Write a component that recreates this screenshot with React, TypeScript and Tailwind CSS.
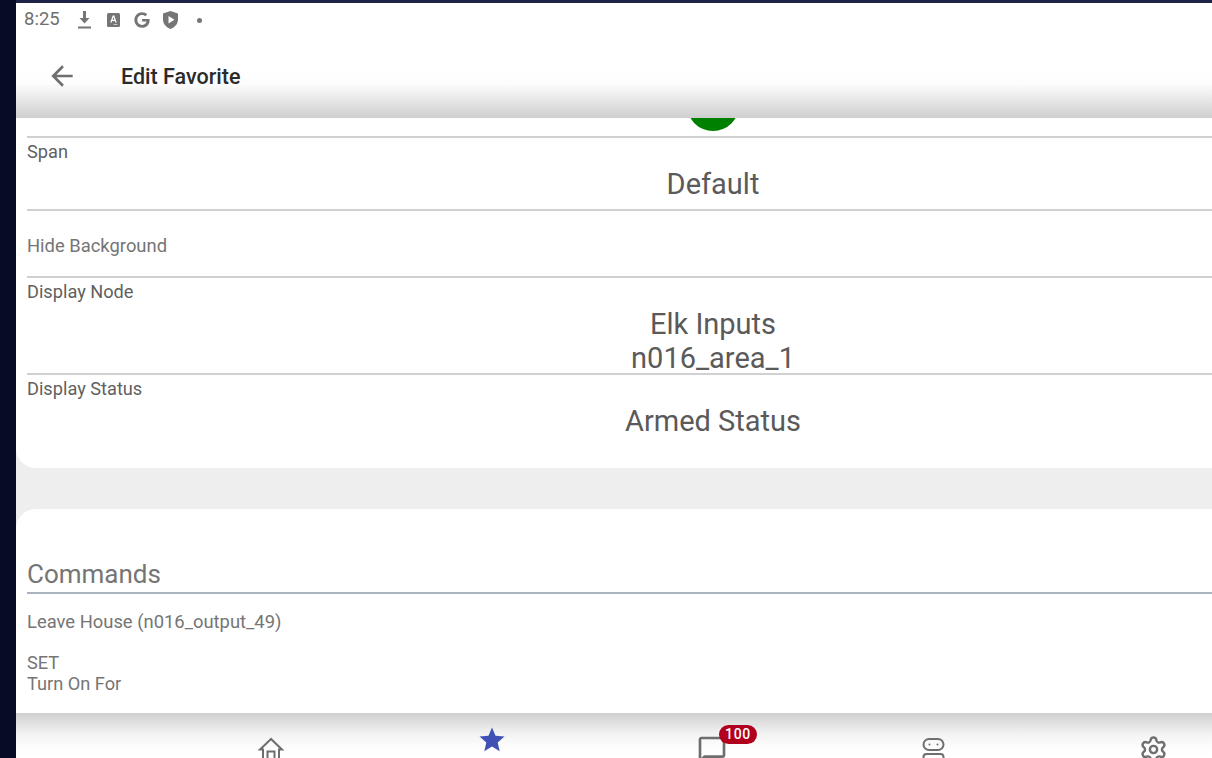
import { FaGoogle } from 'react-icons/fa'
import { Settings as SettingsIcon } from 'lucide-react'

function StatusBar() {
  return (
    <div className="flex h-[34px] items-center pl-2 text-[18.5px] text-[#6f6f6f]">
      <span className="w-[36px]">8:25</span>
      <div className="ml-[18px] flex items-center">
        <svg width="13" height="18" viewBox="0 0 13 18" fill="#757575">
          <path d="M5 0h3v7h3.500L6.500 12.500 1.500 7H5z" />
          <rect x="0" y="15.500" width="13" height="2" />
        </svg>
        <svg className="ml-[16px]" width="13" height="14" viewBox="0 0 13 14">
          <rect x="0" y="0" width="13" height="14" rx="1.500" fill="#757575" />
          <path d="M5.700 2.500 3.300 9.500h1.400l.5-1.500h2.600l.5 1.500h1.400L7.300 2.500zM5.600 6.700l.9-2.600.9 2.600z" fill="#fff" fillRule="evenodd" />
          <rect x="6.500" y="11" width="4" height="1" fill="#c8c8c8" />
        </svg>
        <FaGoogle size={16} className="ml-[14px] text-[#757575]" />
        <svg className="ml-[13px]" width="15" height="18" viewBox="0 0 15 18" fill="#757575">
          <path d="M7.500 0 15 2.500v6c0 4.200-3 7.800-7.500 9.500C3 16.300 0 12.700 0 8.500v-6z" />
          <path d="M5.500 5v7.500L11.500 8.700z" fill="#fff" />
        </svg>
        <span className="ml-[19px] h-[5px] w-[5px] rounded-full bg-[#757575]" />
      </div>
    </div>
  )
}

function Header() {
  return (
    <div className="z-10 h-[115px] shrink-0 bg-[linear-gradient(to_bottom,#ffffff_0%,#ffffff_55%,#fdfdfd_70%,#cfcfcf_100%)]">
      <StatusBar />
      <div className="flex items-center pl-[30px] pt-[22px]">
        <svg width="32" height="32" viewBox="0 0 24 24" fill="#6e6e6e">
          <path d="M20 11H7.830l5.590-5.590L12 4l-8 8 8 8 1.410-1.410L7.830 13H20v-2z" />
        </svg>
        <span className="ml-[43px] mt-[2px] text-[21.500px] font-medium text-[#2b2b2b]">Edit Favorite</span>
      </div>
    </div>
  )
}

function Field({ label, lines, height, last }: { label: string; lines: string[]; height: string; last?: boolean }) {
  return (
    <div className={last ? height : `border-b-2 border-[#d0d0d0] ${height}`}>
      <div className="text-[18.200px] leading-[28px] text-[#5f5f5f]">{label}</div>
      <div className="pt-[1px] text-center text-[29px] leading-[34px] text-[#5a5a5a]">
        {lines.map(l => <div key={l}>{l}</div>)}
      </div>
    </div>
  )
}

function SettingsCard() {
  return (
    <div className="h-[350px] shrink-0 overflow-hidden rounded-b-[20px] bg-white px-[11px]">
      <div className="h-[20px] border-b-2 border-[#d0d0d0]">
        <div className="mx-auto h-[13px] w-[52px] overflow-hidden">
          <div className="-mt-[39px] h-[52px] w-[52px] rounded-full bg-[#008000]" />
        </div>
      </div>
      <Field label="Span" lines={['Default']} height="h-[73px]" />
      <div className="flex h-[67px] items-center border-b-2 border-[#d0d0d0] pt-[5px] text-[18.400px] text-[#757575]">
        Hide Background
      </div>
      <Field label="Display Node" lines={['Elk Inputs', 'n016_area_1']} height="h-[97px]" />
      <Field label="Display Status" lines={['Armed Status']} height="h-[90px]" last />
    </div>
  )
}

function Commands() {
  return (
    <div className="mt-[41px] min-h-0 flex-1 rounded-t-[20px] bg-white px-[11px]">
      <div className="flex h-[85px] items-end border-b-2 border-[#aab4bf] text-[26px] leading-[35px] text-[#757575]">
        Commands
      </div>
      <div className="mt-[14px] text-[18.400px] leading-[28px] text-[#757575]">Leave House (n016_output_49)</div>
      <div className="mt-[16px] text-[18.200px] leading-[21px] text-[#757575]">
        <div>SET</div>
        <div>Turn On For</div>
      </div>
    </div>
  )
}

function RobotIcon() {
  return (
    <svg width="24" height="30" viewBox="0 0 24 30" fill="none" stroke="#6e6e6e" strokeWidth="2">
      <rect x="2.500" y="1" width="20" height="11" rx="5.500" />
      <circle cx="8.500" cy="6.500" r="1" fill="#6e6e6e" stroke="none" />
      <circle cx="16.500" cy="6.500" r="1" fill="#6e6e6e" stroke="none" />
      <rect x="2.500" y="16" width="20" height="14" rx="3" />
    </svg>
  )
}

function BottomNav() {
  return (
    <div className="relative z-10 grid h-[45px] shrink-0 grid-cols-5 overflow-hidden bg-[linear-gradient(to_bottom,#cfcfcf_0%,#f2f2f2_45%,#fdfdfd_75%,#ffffff_100%)] pl-[144px] pr-[146px]">
      <div className="flex justify-center pl-[2px] pt-[24px]">
        <svg width="26" height="32" viewBox="0 0 26 32" fill="none" stroke="#6e6e6e" strokeWidth="2">
          <path d="M13 2 2 12.500h3V28h16V12.500h3z" />
          <path d="M9.500 28V14.500h7V28" />
        </svg>
      </div>
      <div className="flex justify-center pl-[1px] pt-[12px]">
        <svg width="30" height="30" viewBox="0 0 24 24" fill="#3f51b5">
          <path d="M12 17.270 18.180 21l-1.640-7.030L22 9.240l-7.190-.610L12 2 9.190 8.630 2 9.240l5.460 4.730L5.820 21z" />
        </svg>
      </div>
      <div className="flex justify-center pt-[21px]">
        <div className="relative">
          <svg width="32" height="32" viewBox="0 0 24 24" fill="#6e6e6e">
            <path d="M20 2H4c-1.100 0-2 .9-2 2v18l4-4h14c1.100 0 2-.9 2-2V4c0-1.100-.9-2-2-2zm0 14H6l-2 2V4h16v12z" />
          </svg>
          <span className="absolute -top-[9px] left-[23px] rounded-full bg-[#b0001e] px-[6px] text-[14px] leading-[19px] font-medium tracking-wider text-white">
            100
          </span>
        </div>
      </div>
      <div className="flex justify-center pt-[25px]">
        <RobotIcon />
      </div>
      <div className="flex justify-center pt-[22px]">
        <SettingsIcon size={29} strokeWidth={2} className="text-[#6e6e6e]" />
      </div>
    </div>
  )
}

export default function App() {
  return (
    <div className="flex h-[758px] w-[1212px] overflow-hidden bg-[#070b24] font-['Roboto',sans-serif] antialiased">
      <div className="w-4 shrink-0" />
      <div className="flex w-[1394px] shrink-0 flex-col">
        <div className="h-[3px] shrink-0 bg-[#1f2347]" />
        <Header />
        <div className="flex min-h-0 flex-1 flex-col bg-[#eeeeee]">
          <SettingsCard />
          <Commands />
        </div>
        <BottomNav />
      </div>
    </div>
  )
}
